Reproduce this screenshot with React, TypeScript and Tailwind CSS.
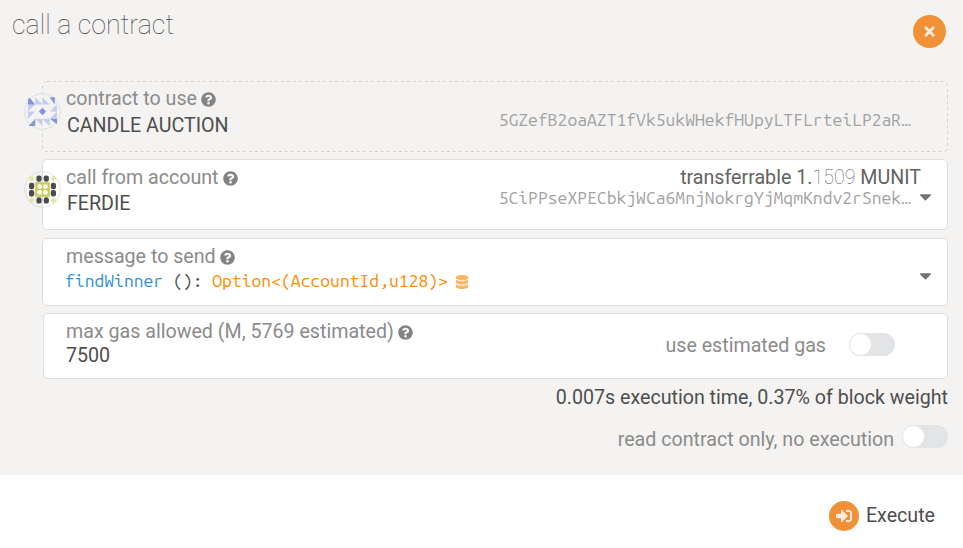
import React from "react";
import { FaQuestionCircle, FaTimes, FaDatabase, FaCaretDown } from "react-icons/fa";
import { FaRightToBracket } from "react-icons/fa6";

const MONO = "font-['Ubuntu_Mono','DejaVu_Sans_Mono',monospace] text-[17.54px] leading-6";

function Label({ children, className = "" }: { children: React.ReactNode; className?: string }) {
  return (
    <div className={"flex h-6 items-center whitespace-nowrap text-[#8b8b8b] " + className}>
      <span>{children}</span>
      <FaQuestionCircle className="ml-[4px] size-[15px] text-[#838383]" />
    </div>
  );
}

function Toggle({ className = "" }: { className?: string }) {
  return (
    <div className={"flex h-[23px] w-[46px] shrink-0 items-center rounded-full bg-[#e2e4e6] " + className}>
      <span className="size-[23px] rounded-full border border-[#e6e7e8] bg-white" />
    </div>
  );
}

function ContractIcon() {
  return (
    <svg viewBox="0 0 37 37" className="absolute -left-[18px] top-[12px] size-[37px]">
      <circle cx="18.5" cy="18.5" r="17.8" fill="#f4f3f2" stroke="#dfdfdf" />
      <g fill="#c2cdef">
        <path d="M11.2 4.3v7.2h7.2zM18.4 4.3v7.2h7.2z" />
        <path d="M25.8 11.3H33l-7.2 7.2zM25.8 18.5H33l-7.2 7.2z" transform="rotate(180 29.4 18.5)" />
        <path d="M11.2 25.8h7.2V33zM18.4 25.8h7.2V33z" />
        <path d="M4 11.3h7.2L4 18.5zM4 18.5h7.2L4 25.8z" />
      </g>
      <g fill="#8296d8">
        <path d="M4 11.5V6l2-1 5.2 6.5zM25.6 4.3h5.2v7.2zM4.5 33l6.7-7.2V33zM25.8 25.8H33v5.4z" />
        <path d="M18.5 14.8l3.7 3.7-3.7 3.7-3.7-3.7z" />
      </g>
    </svg>
  );
}

function AccountIcon() {
  const dots = [[15, 7.6], [22.3, 7.6], [15, 29.4], [22.3, 29.4], [7.6, 15], [7.6, 22.2], [29.4, 15], [29.4, 22.2]];
  const holes = [[15.6, 15.6], [21.4, 15.6], [15.6, 21.4], [21.4, 21.4]];
  const corners = [[7.6, 7.6], [29.4, 7.6], [7.6, 29.4], [29.4, 29.4]];
  return (
    <svg viewBox="0 0 37 37" className="absolute -left-[19px] top-[11px] size-[37px]">
      <circle cx="18.5" cy="18.5" r="17.8" fill="#f4f3f2" stroke="#dfdfdf" />
      <path d="M18.5 1.2a17.3 17.3 0 0 1 0 34.6z" fill="#fff" />
      <path d="M18.5 1v35" stroke="#dedede" />
      {corners.map(([x, y]) => (
        <path key={`${x}-${y}`} d={`M${x} ${y - 3.2}l3.2 3.2-3.2 3.2-3.2-3.2z`} fill="#e3e5ae" />
      ))}
      {dots.map(([x, y]) => (
        <rect key={`${x}-${y}`} x={x - 2.6} y={y - 3.2} width="5.2" height="6.4" rx="2.2" fill="#4b4b4b" />
      ))}
      <rect x="11.2" y="11.2" width="14.6" height="14.6" fill="#cbcb5c" />
      {holes.map(([x, y]) => (
        <circle key={`${x}-${y}`} cx={x} cy={y} r="2.4" fill="#fff" />
      ))}
    </svg>
  );
}

export default function App() {
  return (
    <div className="flex h-[548px] w-[963px] flex-col overflow-hidden bg-white font-[Roboto,sans-serif] text-[19.65px] leading-6 text-[#4e4e4e]">
      <main className="h-[475px] bg-[#f4f3f2] pl-[42px] pr-[15px]">
        <header className="-ml-[30px] -mr-[15px] flex h-[81px] items-start justify-between pr-[17px]">
          <h1 className="mt-[9px] text-[26.8px] font-thin leading-8">call a contract</h1>
          <button className="mt-[15px] flex size-[33px] items-center justify-center rounded-full bg-[#f19135] text-[#fcebdc]">
            <FaTimes className="size-[15px]" />
          </button>
        </header>

        <section className="relative flex h-[71px] justify-between pl-[24px] pr-[37px] pt-px">
          <svg className="absolute inset-0 size-full" fill="none" stroke="#d2d2d2">
            <rect x="0.5" y="0.5" width="905" height="70" rx="4.5" strokeDasharray="3 3" />
          </svg>
          <ContractIcon />
          <div className="pt-[5px]">
            <Label>contract to use</Label>
            <div className="mt-[3px] pl-px">CANDLE AUCTION</div>
          </div>
          <div className={MONO + " mt-[26px] text-[#a2a2a2]"}>5GZefB2oaAZT1fVk5ukWHekfHUpyLTFLrteiLP2aR…</div>
        </section>

        <section className="relative mt-[7px] flex h-[71px] justify-between rounded-[5px] border border-[#dedede] bg-white pl-[23px] pr-[12px]">
          <AccountIcon />
          <div className="pt-[6px]">
            <Label>call from account</Label>
            <div className="mt-[2px] pl-px">FERDIE</div>
          </div>
          <div className="flex">
            <div>
              <div className="-mr-[10px] mt-[6px] text-right text-[#636363]">
                transferrable 1.<span className="font-thin">1509</span> MUNIT
              </div>
              <div className={MONO + " -mt-[4px] text-[#a2a2a2]"}>5CiPPseXPECbkjWCa6MnjNokrgYjMqmKndv2rSnek…</div>
            </div>
            <FaCaretDown className="ml-[5px] mt-[27px] size-[19px] text-[#737373]" />
          </div>
        </section>

        <section className="mt-[8px] flex h-[68px] justify-between rounded-[5px] border border-[#dedede] bg-white pl-[23px] pr-[12px]">
          <div className="pt-[6px]">
            <Label>message to send</Label>
            <div className={MONO + " -ml-px flex items-center whitespace-pre"}>
              <span className="text-[#2f8fdd]">findWinner</span>
              <span> (): </span>
              <span className="text-[#ff8c00]">{"Option<(AccountId,u128)>"}</span>
              <FaDatabase className="relative top-px ml-[7px] size-[14px] text-[#ffb565]" />
            </div>
          </div>
          <FaCaretDown className="mt-[27px] size-[19px] text-[#737373]" />
        </section>

        <section className="ml-px mt-[7px] flex h-[66px] justify-between rounded-[5px] border border-[#dedede] bg-white pl-[22px] pr-[52px]">
          <div className="pt-[6px]">
            <Label>max gas allowed (M, 5769 estimated)</Label>
            <div>7500</div>
          </div>
          <div className="flex items-start">
            <span className="mt-[20px] text-[#8b8b8b]">use estimated gas</span>
            <Toggle className="ml-[23px] mt-[19px]" />
          </div>
        </section>

        <div className="mt-[7px] text-right">0.007s execution time, 0.37% of block weight</div>
        <div className="mt-[15px] flex justify-end text-[#8b8b8b]">
          <span className="mt-[3px]">read contract only, no execution</span>
          <Toggle className="ml-[8px]" />
        </div>
      </main>
      <footer className="flex items-start justify-end pr-[28px]">
        <button className="mt-[26px] flex size-[30px] items-center justify-center rounded-full bg-[#f19135] text-[#fcebdc]">
          <svg viewBox="0 0 512 512" fill="currentColor" className="size-[16px]">
            <path d="M416 448h-84c-7 0-12-5-12-12v-40c0-7 5-12 12-12h84c18 0 32-14 32-32V160c0-18-14-32-32-32h-84c-7 0-12-5-12-12V76c0-7 5-12 12-12h84c53 0 96 43 96 96v192c0 53-43 96-96 96zm-47-209L201 71c-15-15-41-4-41 17v96H24c-13 0-24 11-24 24v96c0 13 11 24 24 24h136v96c0 21 26 32 41 17l168-168c9-9 9-25 0-34z" />
          </svg>
        </button>
        <span className="ml-[7px] mt-[29px]">Execute</span>
      </footer>
    </div>
  );
}
